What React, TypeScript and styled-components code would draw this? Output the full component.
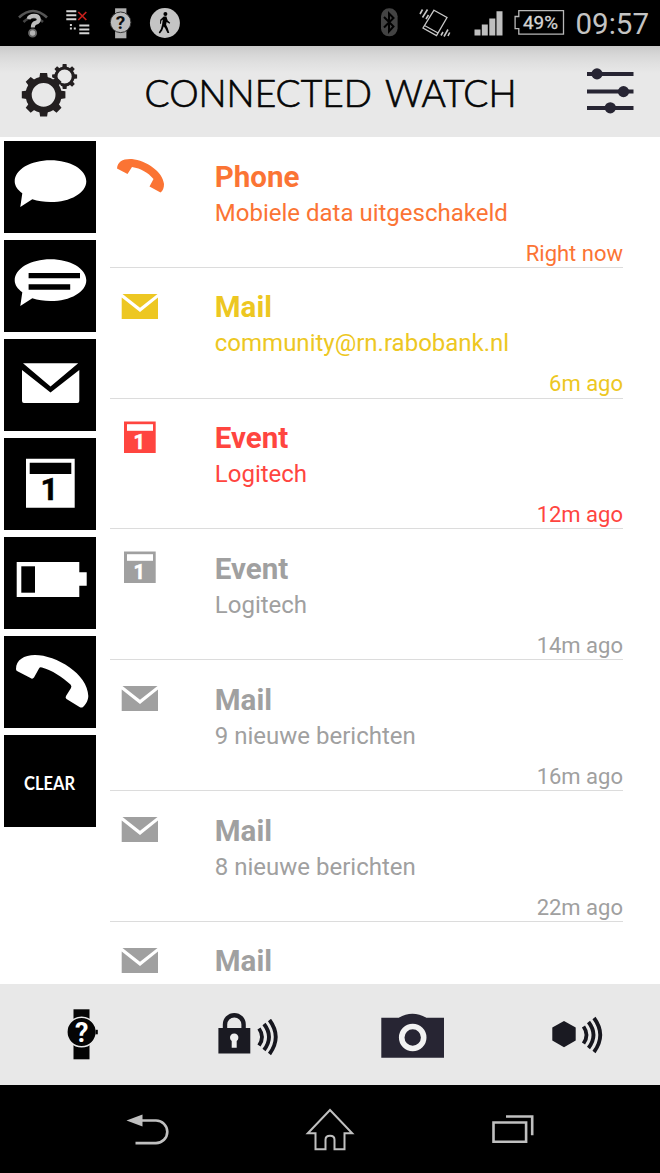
import React from "react";
import styled, { createGlobalStyle } from "styled-components";

const Global = createGlobalStyle`
  body { margin: 0; background: #fff; font-family: Roboto, "Liberation Sans", sans-serif; }
  svg { display: block; flex: none; overflow: visible; }
`;

const Screen = styled.div`
  width: 660px;
  height: 1173px;
  display: flex;
  flex-direction: column;
  overflow: hidden;
  background: #fff;
`;

const StatusBar = styled.div`
  height: 46px;
  flex: none;
  display: flex;
  justify-content: space-between;
  background: #000;
  padding: 0 11px 0 18px;
`;

const StatusGroup = styled.div<{ $gap: number }>`
  display: flex;
  gap: ${(p) => p.$gap}px;
`;

const Header = styled.header`
  height: 91px;
  box-sizing: border-box;
  flex: none;
  display: flex;
  justify-content: space-between;
  align-items: flex-start;
  padding: 0 26px 0 22px;
  background: linear-gradient(#c9c9c9 0, #d6d6d6 8px, #e0e0e0 17px, #e8e8e8 27px);
`;

const Content = styled.main`
  flex: 1;
  min-height: 0;
  display: flex;
  overflow: hidden;
`;

const Sidebar = styled.nav`
  width: 106.5px;
  flex: none;
  box-sizing: border-box;
  padding: 4px 0 0 3.5px;
  display: flex;
  flex-direction: column;
  gap: 7px;
`;

const Tile = styled.button`
  width: 92px;
  height: 92px;
  flex: none;
  padding: 0;
  border: 0;
  background: #000;
  font-family: inherit;
`;

const List = styled.div`
  width: 513px;
  margin-left: 3.5px;
`;

const Row = styled.div<{ $color: string }>`
  height: 130.8px;
  box-sizing: border-box;
  border-bottom: 1px solid #dcdcdc;
  display: grid;
  grid-template-columns: 104.8px 1fr;
  color: ${(p) => p.$color};
`;

const RowText = styled.div`
  display: flex;
  flex-direction: column;
  padding-top: 21.6px;
`;

const RowTitle = styled.div`
  font-size: 29.5px;
  line-height: 36px;
  font-weight: 700;
`;

const RowDetail = styled.div`
  font-size: 24px;
  line-height: 28px;
  margin-top: 4px;
  white-space: nowrap;
`;

const RowTime = styled.div`
  font-size: 22px;
  line-height: 26px;
  margin-top: 14.1px;
  text-align: right;
`;

const Toolbar = styled.footer`
  height: 101px;
  flex: none;
  display: grid;
  grid-template-columns: repeat(4, 165px);
  background: #e8e8e8;
`;

const NavBar = styled.div`
  height: 88px;
  flex: none;
  display: flex;
  justify-content: center;
  gap: 138px;
  background: #000;
`;

const gearPath = (cx: number, cy: number, r: number, tip: number, half: number) => {
  const parts: string[] = [];
  for (let i = 0; i < 8; i++) {
    const a = (i * Math.PI) / 4;
    const pt = (rad: number, off: number) =>
      `${(cx + Math.cos(a) * rad - Math.sin(a) * off).toFixed(2)} ${(cy + Math.sin(a) * rad + Math.cos(a) * off).toFixed(2)}`;
    parts.push(`M${pt(r - 2, -half)}L${pt(tip, -half * 0.8)}L${pt(tip, half * 0.8)}L${pt(r - 2, half)}Z`);
  }
  return parts.join("");
};

const Gears = () => (
  <svg width="56" height="91" viewBox="22 46 56 91">
    <circle cx="64.6" cy="76.500" r="8.600" fill="none" stroke="#231f20" strokeWidth="3" />
    <path d={gearPath(64.6, 76.5, 10, 12.5, 2.4)} fill="#231f20" />
    <circle cx="43.600" cy="94.800" r="19.600" fill="#e8e8e8" />
    <circle cx="43.600" cy="94.800" r="15" fill="none" stroke="#231f20" strokeWidth="6.200" />
    <path d={gearPath(43.6, 94.8, 17.5, 21.8, 4.4)} fill="#231f20" />
  </svg>
);

const Title = () => (
  <svg width="372" height="91" viewBox="145 46 372 91" fill="#050505" stroke="#050505" strokeWidth="0.7" fontFamily="Lato, sans-serif" fontSize="37.5" fontWeight="300">
    <text x="143.500" y="106.500" textLength="227.500" lengthAdjust="spacingAndGlyphs">CONNECTED</text>
    <text x="384" y="106.500" textLength="131.500" lengthAdjust="spacingAndGlyphs">WATCH</text>
  </svg>
);

const Sliders = () => (
  <svg width="48" height="91" viewBox="586 46 48 91" fill="#272533">
    <path d="M587 71.9h46.5v4H587zM587 89.600h46.5v4H587zM587 106h46.5v4H587z" />
    <circle cx="597" cy="73.9" r="5.6" />
    <circle cx="623.5" cy="91.6" r="5.6" />
    <circle cx="610.3" cy="107.8" r="5.6" />
  </svg>
);

const StatusIcons = () => (
  <>
    <StatusGroup $gap={17.7}>
      <svg width="30" height="46" viewBox="18 0 30 46">
        <g fill="none" stroke="#555" strokeWidth="2.600">
          <path d="M19 17.500Q33 4.500 47 17.500" />
          <path d="M23.500 22Q33 13 43 22" stroke="#444" />
        </g>
        <path d="M28.500 19q1-3.200 5.500-3.200t4.800 3.400q0 2.800-3 3.600t-3 4.700" fill="none" stroke="#bdbdbd" strokeWidth="4" />
        <circle cx="32.600" cy="33" r="3.600" fill="#b5b5b5" stroke="#666" strokeWidth="1.800" />
      </svg>
      <svg width="27" height="46" viewBox="65.700 0 27 46">
        <path d="M66 10.300h10v2H66zM66 14.300h10v2H66zM66 18.300h10v2H66zM79 24.500h10v2H79zM79 28.400h10v2H79zM79 32.300h10v2H79zM69.600 24h2v2h-2zM69.600 27.500h2v2h-2zM73.500 27.500h2v2h-2z" fill="#d5d5d5" />
        <path d="M78 12l8 8M86 12l-8 8" stroke="#c8201c" strokeWidth="1.700" />
      </svg>
      <svg width="22" height="46" viewBox="110.400 0 22 46">
        <path d="M115.500 8.300h11.300v30h-11.300z" fill="#b0b0b0" />
        <circle cx="121" cy="22.300" r="10.300" fill="#bdbdbd" stroke="#333" strokeWidth="1" />
        <text x="121" y="29" textAnchor="middle" fontSize="19" fontWeight="700" fill="#111">?</text>
      </svg>
      <svg width="30" height="46" viewBox="150.100 0 30 46">
        <circle cx="165" cy="23" r="15" fill="#c4c4c4" />
        <circle cx="165.500" cy="14" r="2" fill="#000" />
        <path d="M163.800 16.500h2.700l1.300 4 2.500 2.300-.600 1-3-1.800-.500 2.800 1.600 3.200 1.600 5h-1.800l-2.500-5-1.300-1.500-1.500 4-2.300 3-1.200-.900 2.200-3.600 1.200-4.500.700-5-1.500 1.300-.300 3h-1l.200-4z" fill="#000" />
      </svg>
    </StatusGroup>
    <StatusGroup $gap={12}>
      <svg width="26" height="46" viewBox="381 0 26 46">
        <rect x="381" y="8.300" width="16.600" height="28" rx="8" fill="#434343" />
        <path d="M384 17l9.500 9.500-4.500 5V13.500l4.500 4.500-9.500 9.500" fill="none" stroke="#000" strokeWidth="2" />
      </svg>
      <svg width="43" height="46" viewBox="418 0 43 46">
        <g fill="none" stroke="#c8c8c8" strokeWidth="1.300">
          <path d="M433 10.200l13 7.300-10.500 18-13.500-7.500zM423.500 25.500l13.500 7.500" />
          <path d="M419 14l2.500-4.500M421.500 17.500l5-8M425 19l2.500-4M440 35.500l2-3.500M443 36.500l4-7M447 36l1.700-3.500" strokeWidth="1.600" />
        </g>
      </svg>
      <svg width="29" height="46" viewBox="474.500 0 29 46">
        <path d="M475 29.500h6v6h-6zM482.300 24.500h6v11h-6zM489.800 18.500h6v17h-6zM497 11.300h6v24.200h-6z" fill="#bfbfbf" />
      </svg>
      <svg width="50" height="46" viewBox="515 0 50 46">
        <path d="M518.800 10.700h44.700v23.500h-44.700v-5.500h-3.700V16.500h3.700z" fill="none" stroke="#b8b8b8" strokeWidth="1.300" />
        <text x="523" y="29.300" fontSize="19" fontWeight="400" textLength="35" lengthAdjust="spacingAndGlyphs" fill="#d5d5d5" stroke="#d5d5d5" strokeWidth="0.300">49%</text>
      </svg>
      <svg width="72" height="46" viewBox="577 0 72 46">
        <text x="575.500" y="34" fontSize="30" fontWeight="400" textLength="73.500" lengthAdjust="spacingAndGlyphs" fill="#c4c4c4">09:57</text>
      </svg>
    </StatusGroup>
  </>
);

const handset =
  "M12 33C12 24 20 19 31 19C52 19 84 38 84.300 60C84.300 65 81 69 79 71Q77.500 72 75.500 71L62.500 63Q61 62 62 60L67 52Q68 50 66.500 48.500C58 41 48 34 38 31.500Q36 30.500 35 32.500L30 41.500Q28.500 43.500 26.500 42L13 35Q12 34.500 12 33Z";
const bubble =
  "M46.500 19.300c19.800 0 35.800 9.300 35.800 20.900s-16 20.900-35.800 20.900c-6.500 0-12.600-1-18.200-2.800L16.300 66l2-13.700c-4.700-3.500-7.600-7.600-7.600-12.100 0-11.600 16-20.900 35.800-20.900z";

const TileIcon = ({ kind }: { kind: string }) => (
  <svg width="92" height="92" viewBox="0 0 92 92" fill="#fff">
    {kind === "chat" && <path d={bubble} />}
    {kind === "message" && (
      <>
        <path d={bubble} />
        <path d="M24.600 33H76v5.300H24.600zM24.600 44.300h41.600v5.400H24.600z" fill="#000" />
      </>
    )}
    {kind === "mail" && (
      <path d="M19 24.300h55.200L46.500 47.500zM18 31l28.500 22.500L75.300 31v31q0 2-2 2H20q-2 0-2-2z" />
    )}
    {kind === "event" && (
      <>
        <path d="M22 20.700h48.700v49H22z" />
        <path d="M25.700 24.700h41.600V36H25.700z" fill="#000" />
        <text x="45.500" y="62.300" textAnchor="middle" fontSize="31" fontWeight="700" fill="#000" stroke="#000" strokeWidth="0.500">1</text>
      </>
    )}
    {kind === "battery" && (
      <>
        <path d="M12.700 25h62.600v10.300h7.400v13.400h-7.400V60H12.700z" />
        <path d="M17.300 29.300H31v26.400H17.300z" fill="#000" />
      </>
    )}
    {kind === "phone" && <path d={handset} />}
    {kind === "clear" && (
      <text x="45.500" y="54.500" textAnchor="middle" fontFamily="Lato, sans-serif" fontSize="18" fontWeight="700" textLength="51" lengthAdjust="spacingAndGlyphs">
        CLEAR
      </text>
    )}
  </svg>
);

const RowIcon = ({ kind }: { kind: string }) => (
  <svg width="104" height="100" viewBox="0 0.500 104 100" fill="currentColor">
    {kind === "phone" && (
      <path d="M7 32C7.500 25 13 22 22 22.500C36 24 53 35 54 47.500C54 51.500 53 54 50.500 56L39.500 50L43.500 42.500C38 36 31 32 22 30.500L17.500 37.500Z" />
    )}
    {kind === "mail" && <path d="M12.500 26.500H47.500L30 40.300zM11.700 30l18.300 14.600L48 30v21.500H11.700z" />}
    {kind === "event" && (
      <>
        <path d="M14 23h31.700v31.500H14z" />
        <path d="M17 25.700h26v6.600H17z" fill="#fff" />
        <text x="29.300" y="50" textAnchor="middle" fontSize="20" fontWeight="700" fill="#fff" stroke="#fff" strokeWidth="0.500">1</text>
      </>
    )}
  </svg>
);

const Waves = () => (
  <path d="M0-8.500q6 8.500 0 17M5-13q10 13 0 26M10.500-17q12.500 17 0 34" fill="none" stroke="#16161e" strokeWidth="3.800" />
);

const ToolIcon = ({ kind }: { kind: string }) => (
  <svg width="165" height="101" viewBox="0 0 165 101" fill="#1a1a22">
    {kind === "watch" && (
      <g fill="#050505">
        <path d="M73.500 25.300h16v50h-16z" />
        <circle cx="81.600" cy="48" r="14.800" stroke="#e8e8e8" strokeWidth="1.600" />
        <path d="M95.500 45.800h2.300v4.500h-2.300z" />
        <text x="81.600" y="57.800" textAnchor="middle" fontSize="27" fontWeight="700" fill="#fff">?</text>
      </g>
    )}
    {kind === "lock" && (
      <>
        <path d="M53.400 44h31.900v25.500H53.400z" />
        <path d="M60 46v-5.500a9.300 9.300 0 0 1 18.600 0V46" fill="none" stroke="#1a1a22" strokeWidth="4.400" />
        <path d="M66.700 57a4.200 4.200 0 1 1 5 0v6.700h-5z" fill="#eee" />
        <g transform="translate(94 53)"><Waves /></g>
      </>
    )}
    {kind === "camera" && (
      <>
        <path d="M51.300 33.700h17.500q13.500-8 27.500 0H114v40H51.300z" fill="#272533" />
        <circle cx="82.700" cy="53.500" r="11" fill="none" stroke="#f2f2f2" strokeWidth="5.600" />
      </>
    )}
    {kind === "sensor" && (
      <>
        <path d="M69 37l11.700 6.500v13L69 63.200l-11.700-6.700v-13z" />
        <g transform="translate(88.500 51)"><Waves /></g>
      </>
    )}
  </svg>
);

const NavIcons = () => (
  <>
    <svg width="42" height="88" viewBox="127.500 1085 42 88">
      <path d="M142 1120.500h14.500a11.200 11.200 0 0 1 0 22.600h-20.500" fill="none" stroke="#c0c0c0" strokeWidth="2.600" />
      <path d="M127 1120.500l16-6v12z" fill="#c0c0c0" />
    </svg>
    <svg width="47" height="88" viewBox="307 1085 47 88" fill="none" stroke="#c0c0c0" strokeWidth="2">
      <path d="M330 1110l-22.200 23.200h7.700v16h10v-9.500q0-4 4.500-4t4.500 4v9.500h10v-16h7.700z" />
    </svg>
    <svg width="42" height="88" viewBox="492.500 1085 42 88" fill="none" stroke="#c0c0c0" strokeWidth="2.600">
      <path d="M494 1122.500h32.600v19.300H494zM506.500 1116.500h26.200v18.700" />
    </svg>
  </>
);

const rows = [
  { kind: "phone", title: "Phone", detail: "Mobiele data uitgeschakeld", time: "Right now", color: "#fb7434" },
  { kind: "mail", title: "Mail", detail: "community@rn.rabobank.nl", time: "6m ago", color: "#edc722" },
  { kind: "event", title: "Event", detail: "Logitech", time: "12m ago", color: "#ff453f" },
  { kind: "event", title: "Event", detail: "Logitech", time: "14m ago", color: "#a0a0a0" },
  { kind: "mail", title: "Mail", detail: "9 nieuwe berichten", time: "16m ago", color: "#a0a0a0" },
  { kind: "mail", title: "Mail", detail: "8 nieuwe berichten", time: "22m ago", color: "#a0a0a0" },
  { kind: "mail", title: "Mail", detail: "", time: "", color: "#a0a0a0" },
];

export default function App() {
  return (
    <>
      <Global />
      <Screen>
        <StatusBar>
          <StatusIcons />
        </StatusBar>
        <Header>
          <Gears />
          <Title />
          <Sliders />
        </Header>
        <Content>
          <Sidebar>
            {["chat", "message", "mail", "event", "battery", "phone", "clear"].map((k) => (
              <Tile key={k}>
                <TileIcon kind={k} />
              </Tile>
            ))}
          </Sidebar>
          <List>
            {rows.map((r, i) => (
              <Row key={i} $color={r.color}>
                <RowIcon kind={r.kind} />
                <RowText>
                  <RowTitle>{r.title}</RowTitle>
                  <RowDetail>{r.detail}</RowDetail>
                  <RowTime>{r.time}</RowTime>
                </RowText>
              </Row>
            ))}
          </List>
        </Content>
        <Toolbar>
          {["watch", "lock", "camera", "sensor"].map((k) => (
            <ToolIcon key={k} kind={k} />
          ))}
        </Toolbar>
        <NavBar>
          <NavIcons />
        </NavBar>
      </Screen>
    </>
  );
}
